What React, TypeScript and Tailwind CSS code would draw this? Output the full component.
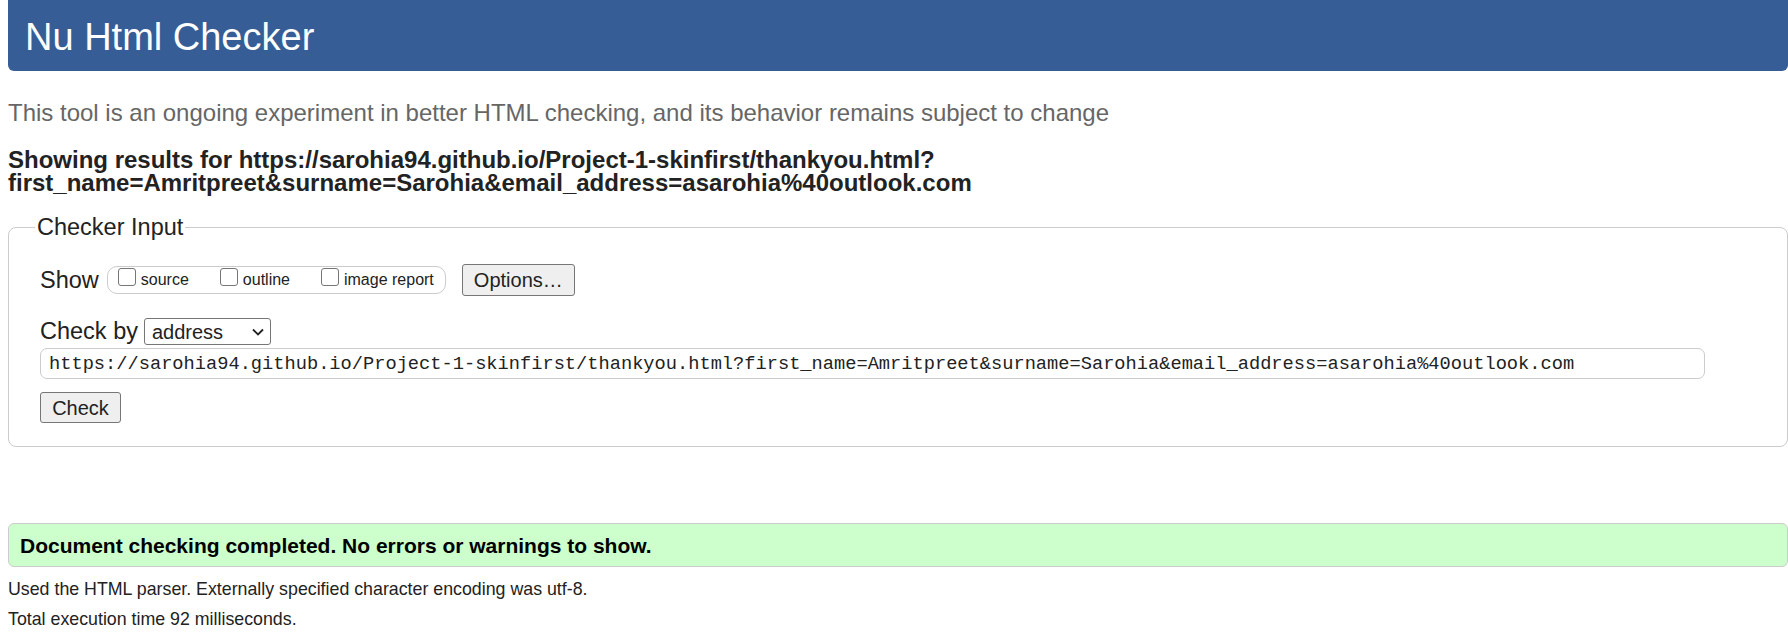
import React from "react";

const url =
  "https://sarohia94.github.io/Project-1-skinfirst/thankyou.html?first_name=Amritpreet&surname=Sarohia&email_address=asarohia%40outlook.com";

const Check = ({ label }: { label: string }) => (
  <label className="flex items-center gap-[5px]">
    <input
      type="checkbox"
      className="appearance-none w-[18px] h-[18px] border border-[#767676] rounded-[3px] bg-white -mt-[6px]"
    />
    <span className="text-[16px]">{label}</span>
  </label>
);

const App = () => {
  return (
    <div className="min-h-screen bg-white font-['Liberation_Sans',Arial,sans-serif] text-[#222]">
      <div className="pl-2">
        <h1 className="h-[71px] bg-[#365d95] rounded-b-[6px] flex items-center pl-[17px] pt-[3px] text-white text-[38px]">
          Nu Html Checker
        </h1>
        <p className="mt-[24px] text-[24px] text-[#666]">
          This tool is an ongoing experiment in better HTML checking, and its behavior remains subject to change
        </p>
        <h2 className="mt-[17px] text-[24px] font-bold leading-[23px]">
          Showing results for https://sarohia94.github.io/Project-1-skinfirst/thankyou.html?
          <br />
          first_name=Amritpreet&amp;surname=Sarohia&amp;email_address=asarohia%40outlook.com
        </h2>

        <fieldset className="mt-[16px] border border-[#ccc] rounded-[8px] pb-[23px]">
          <legend className="ml-[26px] px-[2px] text-[23.5px]">Checker Input</legend>
          <div className="pl-[31px] pr-[82px] pt-[19px] flex flex-col">
            <div className="flex items-center h-[32px]">
              <span className="text-[23.5px] mr-[8px]">Show</span>
              <div className="flex items-center gap-[31px] h-[28px] border border-[#ccc] rounded-[10px] pl-[10px] pr-[11px]">
                <Check label="source" />
                <Check label="outline" />
                <Check label="image report" />
              </div>
              <button className="ml-[16px] h-[32px] w-[113px] border border-[#767676] rounded-[3px] bg-[#efefef] text-[20px]">
                Options…
              </button>
            </div>

            <div className="flex items-center h-[27px] mt-[22px]">
              <span className="text-[23.5px] mr-[6px]">Check by</span>
              <div className="flex items-center justify-between h-[27px] w-[127px] border border-[#767676] rounded-[3px] pl-[7px] pr-[6px] text-[20px]">
                <span>address</span>
                <svg width="12" height="8" viewBox="0 0 12 8" fill="none">
                  <path d="M1 1.5l5 5 5-5" stroke="#222" strokeWidth="1.8" />
                </svg>
              </div>
            </div>

            <input
              readOnly
              value={url}
              className="mt-[3px] h-[31px] w-full border border-[#ccc] rounded-[7px] px-[8px] font-['Liberation_Mono',monospace] text-[18.7px] text-[#222] outline-none"
            />

            <div className="mt-[13px]">
              <button className="h-[31px] w-[81px] border border-[#767676] rounded-[3px] bg-[#efefef] text-[20px]">
                Check
              </button>
            </div>
          </div>
        </fieldset>

        <div className="mt-[76px] h-[44px] flex items-center border border-[#ccc] rounded-[6px] bg-[#ccffcc] pl-[11px]">
          <p className="font-bold text-[21px] text-black">
            Document checking completed. No errors or warnings to show.
          </p>
        </div>

        <p className="mt-[9px] text-[17.8px]">
          Used the HTML parser. Externally specified character encoding was utf-8.
        </p>
        <p className="mt-[3px] text-[17.8px]">Total execution time 92 milliseconds.</p>
      </div>
    </div>
  );
};

export default App;
